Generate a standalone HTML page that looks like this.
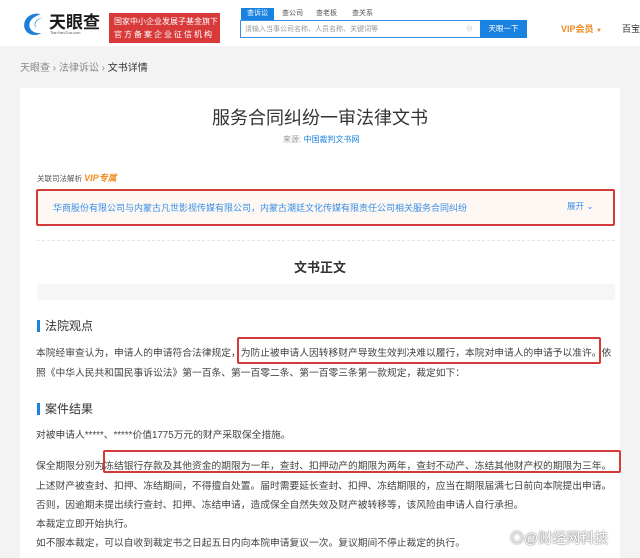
<!DOCTYPE html>
<html><head><meta charset="utf-8"><style>
*{margin:0;padding:0;box-sizing:border-box}
body{width:640px;height:553px;overflow:hidden;background:#f3f3f3;font-family:"Liberation Sans","Noto Sans CJK SC",sans-serif;color:#333;position:relative}
.a{position:absolute;white-space:nowrap}
.hdr{position:absolute;left:0;top:0;width:640px;height:46px;background:#fff}
.card{position:absolute;left:20px;top:88px;width:600px;height:470px;background:#fff}
.rb{position:absolute;border:2px solid #d43a3a;border-radius:2px}
.p{font-size:9.75px;color:#444}
</style></head><body>
<div class="hdr">
 <svg class="a" style="left:20px;top:10px" width="27" height="28" viewBox="0 0 26 28"><path d="M20 4 C10 2 2 9 4 18 C6 25 15 27 21 23 C14 24 8 20 9 14 C10 8 16 6 20 4Z" fill="#1e7fd8"/><path d="M22 8 C16 9 13 14 16 19 C12 15 15 8 22 8Z" fill="#1e7fd8"/></svg>
 <div class="a" style="left:49px;top:8px;font-size:17px;font-weight:bold;color:#1a1a1a">天眼查</div>
 <div class="a" style="left:50px;top:30px;font-size:4px;color:#555">TianYanCha.com</div>
 <div class="a" style="left:109px;top:13px;width:111px;height:30px;background:#d83a3a;color:#fff;font-size:8px;line-height:13px;padding:2px 5px;overflow:hidden">国家中小企业发展子基金旗下<br><span style="letter-spacing:2px">官方备案企业征信机构</span></div>
 <div class="a" style="left:241px;top:8px;width:33px;height:12px;background:#1a82e0;color:#fff;font-size:7px;text-align:center;line-height:12px">查诉讼</div>
 <div class="a" style="left:282px;top:8px;font-size:7px;color:#555">查公司</div>
 <div class="a" style="left:316px;top:8px;font-size:7px;color:#555">查老板</div>
 <div class="a" style="left:352px;top:8px;font-size:7px;color:#555">查关系</div>
 <div class="a" style="left:240px;top:20px;width:287px;height:18px;border:1px solid #3a8ee6;background:#fff"></div>
 <div class="a" style="left:245px;top:24px;font-size:7px;color:#999">请输入当事公司名称、人员名称、关键词等</div>
 <div class="a" style="left:466px;top:24px;font-size:7px;color:#ccc">⊗</div>
 <div class="a" style="left:480px;top:20px;width:47px;height:18px;background:#1a82e0;color:#fff;font-size:7.5px;text-align:center;line-height:18px">天眼一下</div>
 <div class="a" style="left:561px;top:22px;font-size:9px;font-weight:bold;color:#f08a1c">VIP会员 <span style="font-size:6px">▼</span></div>
 <div class="a" style="left:622px;top:22px;font-size:9px;color:#333">百宝</div>
</div>
<div class="a" style="left:20px;top:59px;font-size:10px;color:#888">天眼查 › 法律诉讼 › <span style="color:#333">文书详情</span></div>
<div class="card"></div>
<div class="a" style="left:0;top:104px;width:640px;text-align:center;font-size:18px;color:#333">服务合同纠纷一审法律文书</div>
<div class="a" style="left:283px;top:134px;font-size:8px;color:#999">来源: <span style="color:#1a82e0">中国裁判文书网</span></div>
<div class="a" style="left:37px;top:171px;font-size:7.5px;color:#555">关联司法解析 <b style="color:#f08a1c;font-size:9px;font-style:italic">VIP专属</b></div>
<div class="rb" style="left:36px;top:189px;width:579px;height:37px;background:#fdf8f4"></div>
<div class="a" style="left:53px;top:201px;font-size:9px;color:#3a8ee6">华商股份有限公司与内蒙古凡世影视传媒有限公司，内蒙古潮廷文化传媒有限责任公司相关服务合同纠纷</div>
<div class="a" style="left:567px;top:200px;font-size:8.5px;color:#3a8ee6">展开 ⌄</div>
<div class="a" style="left:37px;top:240px;width:578px;border-top:1px dashed #e6e6e6"></div>
<div class="a" style="left:0;top:257px;width:640px;text-align:center;font-size:13px;font-weight:bold;color:#333">文书正文</div>
<div class="a" style="left:37px;top:284px;width:578px;height:16px;background:#f6f6f6"></div>
<div class="a" style="left:37px;top:320px;width:3px;height:12px;background:#1a82e0"></div>
<div class="a" style="left:45px;top:317px;font-size:12px;color:#333">法院观点</div>
<div class="a p" style="left:36px;top:345px">本院经审查认为，申请人的申请符合法律规定，为防止被申请人因转移财产导致生效判决难以履行，本院对申请人的申请予以准许。依</div>
<div class="rb" style="left:237px;top:337px;width:364px;height:27px"></div>
<div class="a p" style="left:36px;top:365px">照《中华人民共和国民事诉讼法》第一百条、第一百零二条、第一百零三条第一款规定，裁定如下：</div>
<div class="a" style="left:37px;top:403px;width:3px;height:12px;background:#1a82e0"></div>
<div class="a" style="left:45px;top:400px;font-size:12px;color:#333">案件结果</div>
<div class="a p" style="left:36px;top:427px">对被申请人*****、*****价值1775万元的财产采取保全措施。</div>
<div class="a p" style="left:36px;top:458px">保全期限分别为冻结银行存款及其他资金的期限为一年，查封、扣押动产的期限为两年，查封不动产、冻结其他财产权的期限为三年。</div>
<div class="rb" style="left:103px;top:450px;width:518px;height:23px"></div>
<div class="a p" style="left:36px;top:478px">上述财产被查封、扣押、冻结期间，不得擅自处置。届时需要延长查封、扣押、冻结期限的，应当在期限届满七日前向本院提出申请。</div>
<div class="a p" style="left:36px;top:497px">否则，因逾期未提出续行查封、扣押、冻结申请，造成保全自然失效及财产被转移等，该风险由申请人自行承担。</div>
<div class="a p" style="left:36px;top:516px">本裁定立即开始执行。</div>
<div class="a p" style="left:36px;top:535px">如不服本裁定，可以自收到裁定书之日起五日内向本院申请复议一次。复议期间不停止裁定的执行。</div>
<div class="a" style="left:510px;top:528px;font-size:14px;color:#fff;text-shadow:0 0 2px #888,0 0 1px #666">◎@财经网科技</div>
</body></html>
